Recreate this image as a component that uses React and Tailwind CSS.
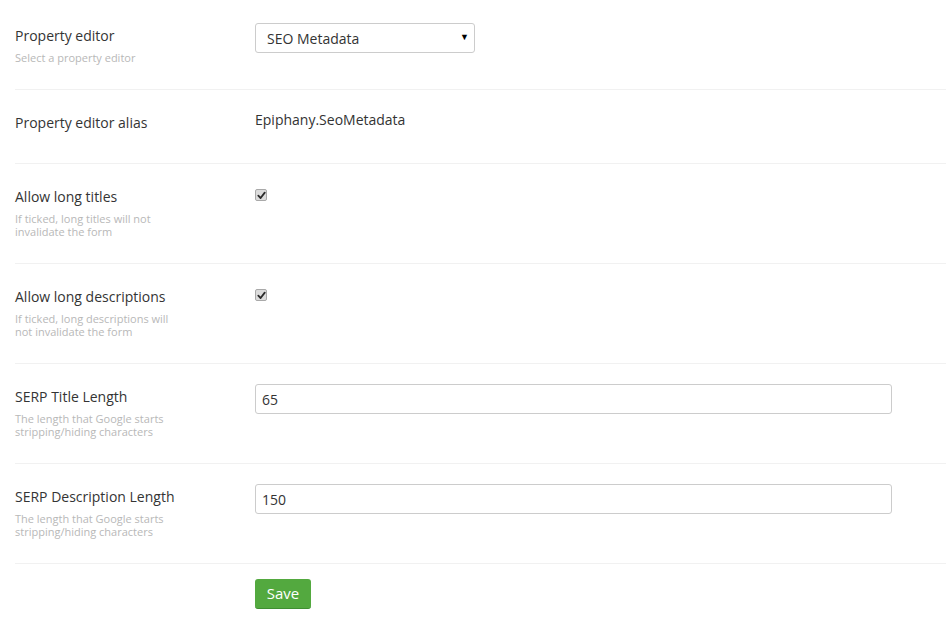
import React from 'react';

const rows = [
  {
    label: 'Property editor',
    description: 'Select a property editor',
    type: 'select',
    value: 'SEO Metadata',
  },
  {
    label: 'Property editor alias',
    description: '',
    type: 'text',
    value: 'Epiphany.SeoMetadata',
  },
  {
    label: 'Allow long titles',
    description: 'If ticked, long titles will not invalidate the form',
    type: 'checkbox',
  },
  {
    label: 'Allow long descriptions',
    description: 'If ticked, long descriptions will not invalidate the form',
    type: 'checkbox',
  },
  {
    label: 'SERP Title Length',
    description: 'The length that Google starts stripping/hiding characters',
    type: 'input',
    value: '65',
  },
  {
    label: 'SERP Description Length',
    description: 'The length that Google starts stripping/hiding characters',
    type: 'input',
    value: '150',
  },
];

const CheckMark = () => (
  <span className="flex h-[12px] w-[12px] items-center justify-center rounded-[2px] border border-[#a9a9a9] bg-[#dcdcdc]">
    <svg width="9" height="9" viewBox="0 0 10 10">
      <path d="M1.5 5.2 L4 7.8 L8.6 1.8" fill="none" stroke="#2b2b2b" strokeWidth="2" strokeLinecap="round" strokeLinejoin="round" />
    </svg>
  </span>
);

const Control = ({ row }) => {
  if (row.type === 'select') {
    return (
      <div className="relative h-[30px] w-[220px]">
        <select
          defaultValue={row.value}
          className="h-[30px] w-[220px] appearance-none rounded-[3px] border border-[#cccccc] bg-white pl-[11px] text-[14px] text-[#333333] outline-none"
        >
          <option>{row.value}</option>
        </select>
        <span className="pointer-events-none absolute right-[6px] top-[8px] text-[9px] leading-[12px] text-black">▼</span>
      </div>
    );
  }
  if (row.type === 'text') {
    return <div className="text-[14px] leading-[20px] text-[#333333]">{row.value}</div>;
  }
  if (row.type === 'checkbox') {
    return (
      <div className="pt-[5px]">
        <CheckMark />
      </div>
    );
  }
  return (
    <input
      type="text"
      defaultValue={row.value}
      className="h-[30px] w-[637px] rounded-[3px] border border-[#cccccc] bg-white px-[6px] text-[14px] text-[#333333] outline-none"
    />
  );
};

export default function App() {
  return (
    <div className="min-h-[635px] bg-white pl-[15px] pt-[3px] font-['Open_Sans',sans-serif] text-[#343434]">
      {rows.map((row) => (
        <div key={row.label} className="flex border-b border-[#f1f1f1] pb-[25px] pt-[20px]">
          <div className="w-[240px] shrink-0 pt-[3px]">
            <div className="text-[14px] leading-[20px] text-[#343434]">{row.label}</div>
            <div className="mt-[5px] max-w-[160px] text-[11px] leading-[13px] text-[#b8b8b8]">
              {row.description}
            </div>
          </div>
          <div>
            <Control row={row} />
          </div>
        </div>
      ))}
      <div className="pl-[240px] pt-[15px]">
        <button className="h-[30px] w-[56px] rounded-[3px] border-b border-[#3f8f31] bg-[#53a93f] text-[15px] text-white">
          Save
        </button>
      </div>
    </div>
  );
}
